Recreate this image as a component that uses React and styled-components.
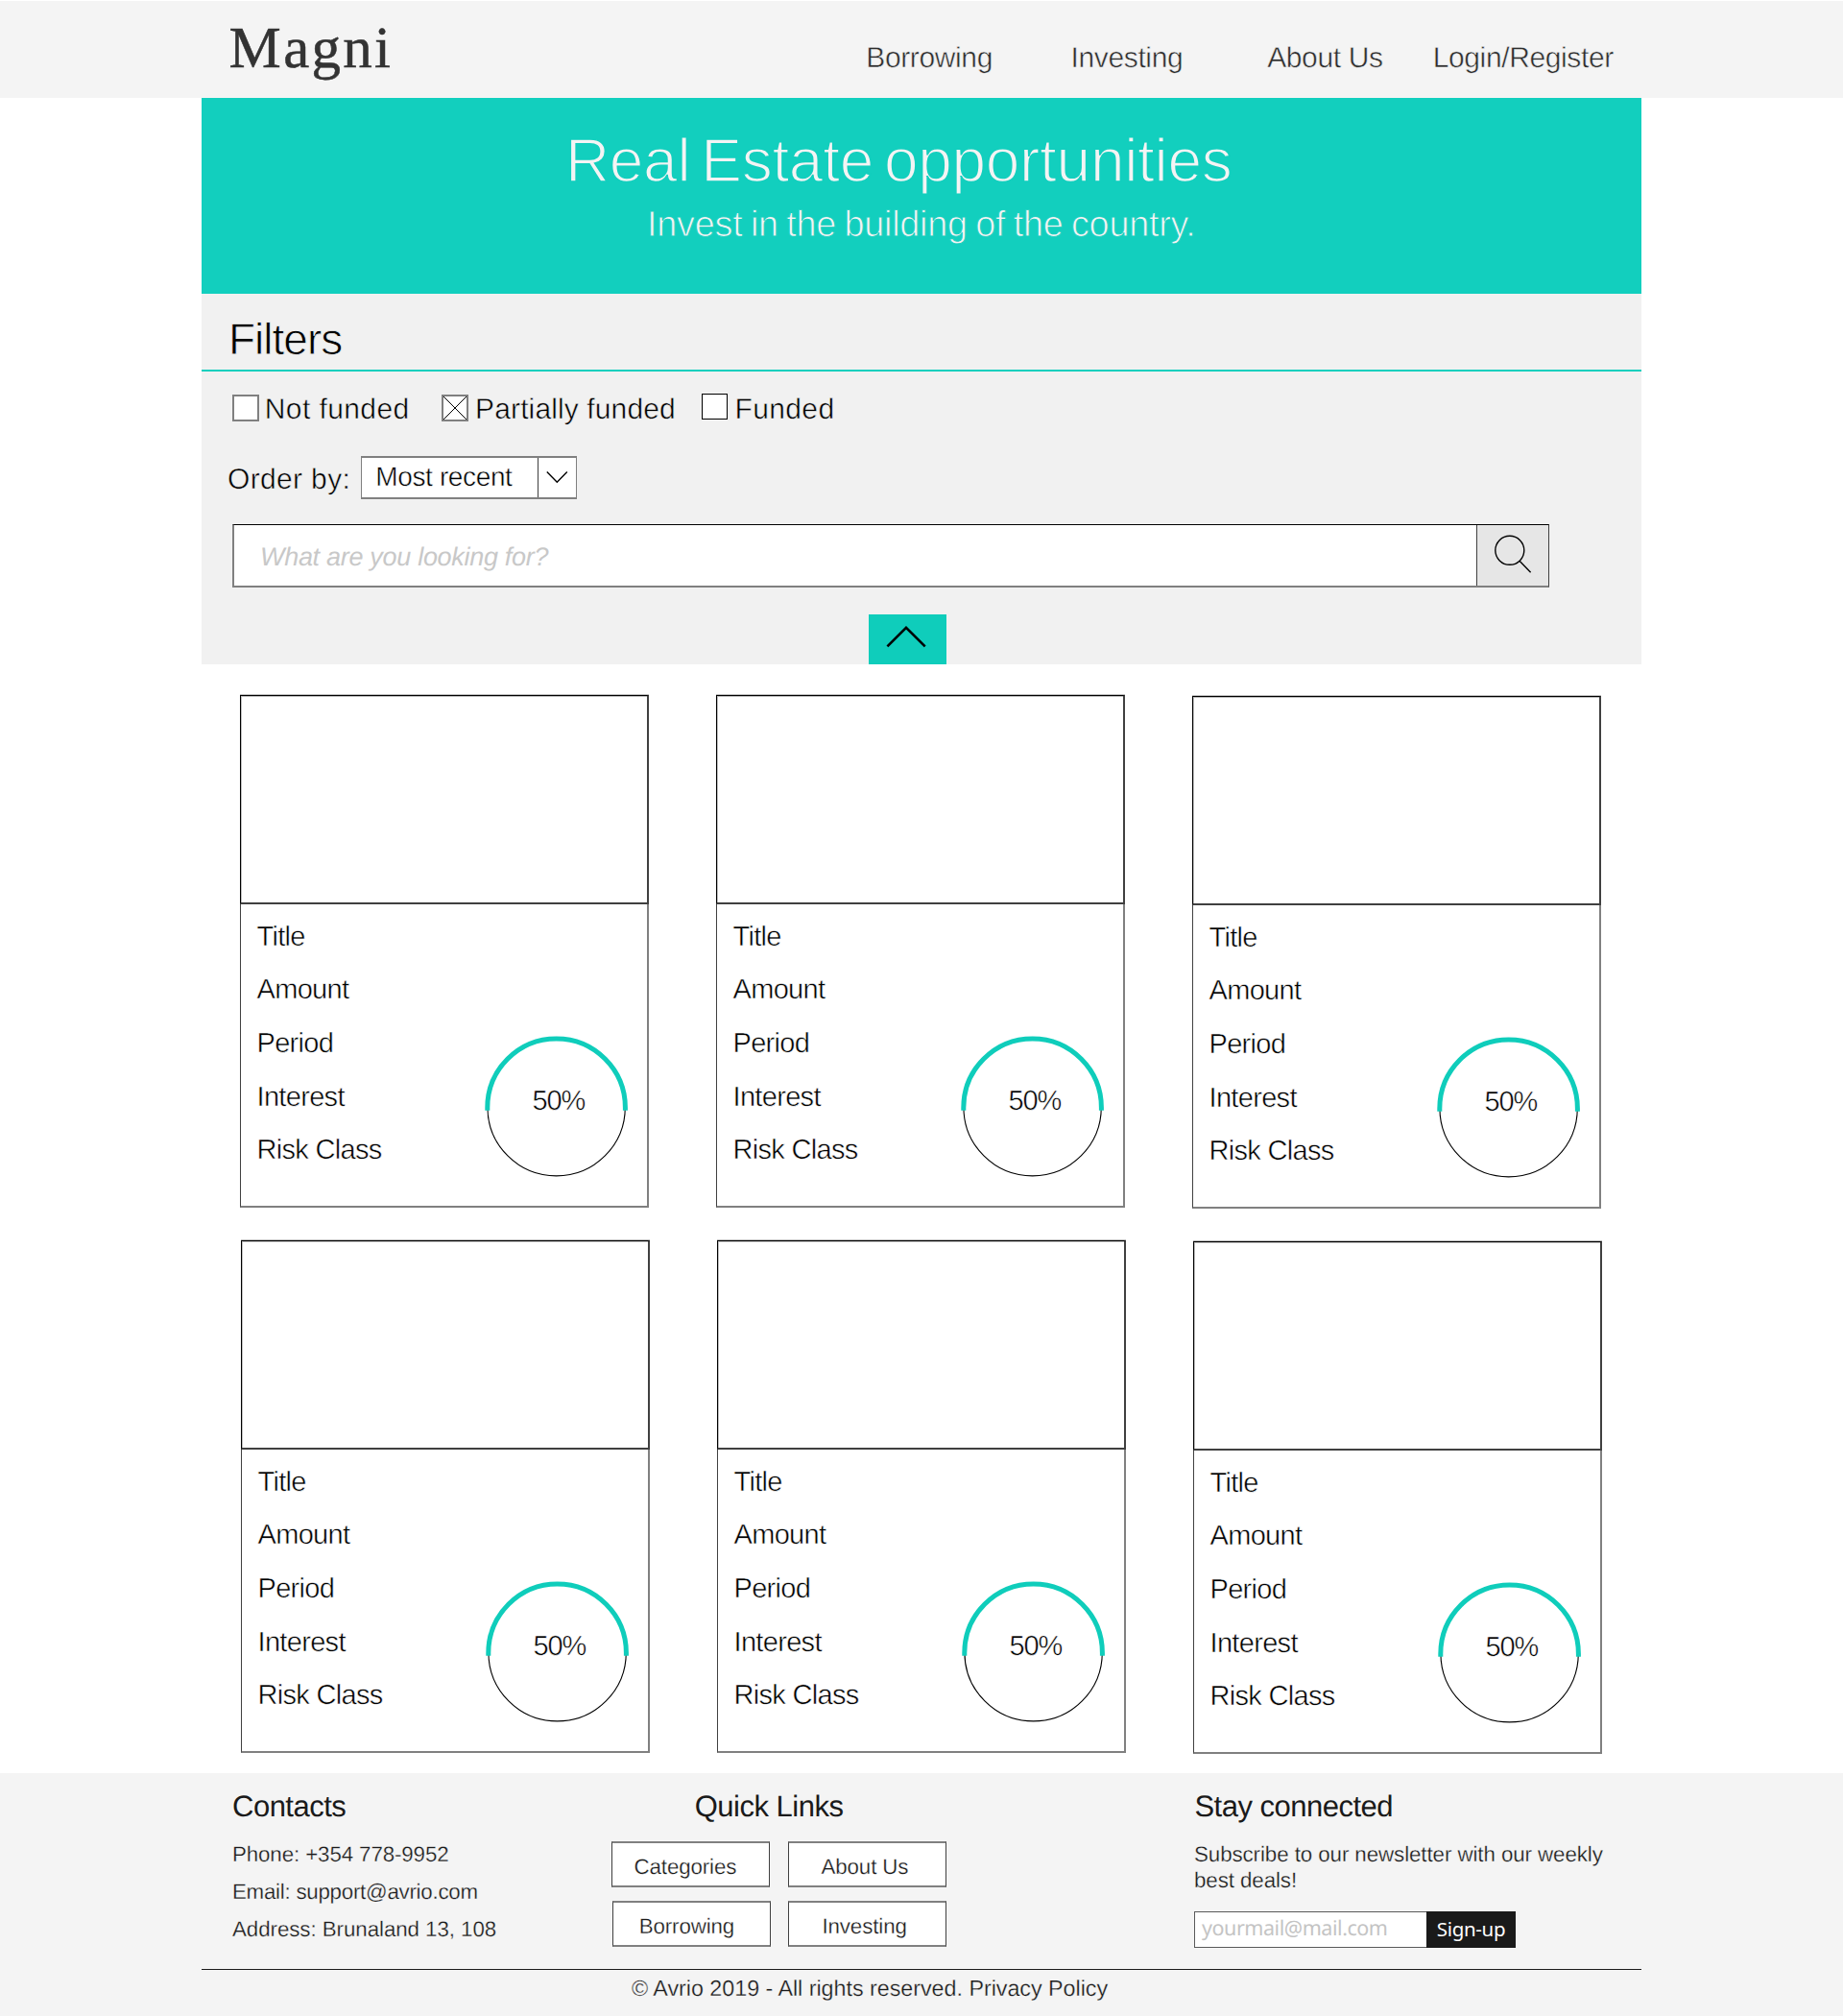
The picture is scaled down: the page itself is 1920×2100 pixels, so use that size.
import React from "react";
import styled, { createGlobalStyle, css } from "styled-components";

const teal = "#12cfbe";
const tealDeep = "#0fcdbb";
const ink = "#1a1a1a";
const edge = "#808080";
const edgeDark = "#404040";
const panel = "#f1f1f1";
const bar = "#f4f4f4";

const GlobalStyle = createGlobalStyle`
  *, *::before, *::after { box-sizing: border-box; }
  body {
    margin: 0;
    background: #fff;
    color: #000;
    font-family: "Liberation Sans", Arial, Helvetica, sans-serif;
    text-rendering: geometricPrecision;
  }
  h1, h2, h3, p, ul { margin: 0; padding: 0; font-weight: 400; }
  ul { list-style: none; }
  a { color: inherit; text-decoration: none; }
  svg { display: block; }
`;

/* Light cut of the sans face: a hairline of the surface colour trims the stems. */
const light = (surface, amount = 0.017) => css`
  -webkit-text-stroke: ${amount}em ${surface};
`;

const Page = styled.div`
  width: 1920px;
  height: 2100px;
  padding-top: 1px;
  overflow: hidden;
`;

const Container = styled.div`
  width: 1500px;
  margin: 0 auto;
`;

/* ---------- header ---------- */

const Header = styled.header`
  height: 101px;
  background: ${bar};
`;

const HeaderInner = styled(Container)`
  display: flex;
  align-items: flex-start;
`;

const Logo = styled.a`
  flex: 0 0 692.3px;
  padding: 20px 0 0 28.6px;
  font-family: "Liberation Serif", "Times New Roman", serif;
  font-size: 61px;
  line-height: 60px;
  letter-spacing: 2.3px;
  color: #333;
  -webkit-text-stroke: 0.5px #333;
`;

const Nav = styled.nav`
  display: grid;
  grid-template-columns: 213.3px 204.6px 172.5px auto;
  margin-top: 40px;
`;

const NavLink = styled.a`
  font-size: 30px;
  line-height: 40px;
  letter-spacing: -0.38px;
  white-space: nowrap;
  color: #2c2c2c;
  ${light(bar)}
`;

/* ---------- banner ---------- */

const Banner = styled.section`
  height: 204px;
  padding-top: 29.5px;
  background: ${teal};
  color: ${bar};
`;

const BannerTitle = styled.h1`
  padding-left: 378.9px;
  font-size: 64px;
  line-height: 70px;
  letter-spacing: -0.3px;
  word-spacing: -6.5px;
  ${light(teal, 0.026)}
`;

const BannerText = styled.p`
  margin-top: 10px;
  padding-left: 464.1px;
  font-size: 37.8px;
  line-height: 44px;
  letter-spacing: -0.25px;
  word-spacing: -1.8px;
  ${light(teal, 0.024)}
`;

/* ---------- filters ---------- */

const Filters = styled.section`
  height: 386px;
  background: ${panel};
`;

const FiltersTitle = styled.h2`
  height: 81px;
  padding: 17px 0 0 28px;
  border-bottom: 2px solid ${teal};
  font-size: 46px;
  line-height: 60px;
  letter-spacing: -1px;
  ${light(panel, 0.018)}
`;

const CheckRow = styled.div`
  display: grid;
  grid-template-columns: 218px 271px auto;
  padding: 20px 0 0 32px;
`;

const Check = styled.label`
  display: flex;
  align-items: flex-start;
  gap: ${(p) => p.$gap}px;
  font-size: 30px;
  line-height: 40px;
  letter-spacing: ${(p) => p.$tracking}px;
  white-space: nowrap;
  ${light(panel)}
`;

const Box = styled.span`
  flex: none;
  width: ${(p) => (p.$crisp ? 27 : 28)}px;
  height: ${(p) => (p.$crisp ? 27 : 28)}px;
  margin-top: ${(p) => (p.$crisp ? 3 : 4)}px;
  border: ${(p) => (p.$crisp ? "1px solid #000" : `2px solid ${edge}`)};
  background: #fff;
`;

const OrderRow = styled.div`
  display: flex;
  align-items: flex-start;
  height: 45px;
  margin-top: 28px;
  padding-left: 27px;
`;

const OrderLabel = styled.span`
  width: 139px;
  padding-top: 3px;
  font-size: 30px;
  line-height: 43px;
  letter-spacing: 0.35px;
  ${light(panel)}
`;

const Select = styled.div`
  display: flex;
  width: 225px;
  height: 45px;
  border: solid ${edge};
  border-width: 2px 1px;
  background: #fff;
`;

const SelectValue = styled.span`
  flex: 1;
  padding-left: 14.3px;
  border-right: 1px solid ${edgeDark};
  font-size: 28px;
  line-height: 40px;
  letter-spacing: -0.37px;
  white-space: nowrap;
  ${light("#fff")}
`;

const SearchBar = styled.div`
  display: flex;
  width: 1372px;
  height: 66px;
  margin: 26px 0 0 32px;
  border: 1px solid #000;
  border-left: 2px solid ${edge};
  border-right-color: ${edgeDark};
  border-bottom: 2px solid ${edge};
  background: #fff;
`;

const SearchHint = styled.span`
  flex: 1;
  padding: 2px 0 0 27px;
  font-size: 27px;
  font-style: italic;
  line-height: 62px;
  letter-spacing: -0.3px;
  color: #c8c8c8;
`;

const SearchButton = styled.button`
  width: 75px;
  padding: 0;
  border: 0;
  border-left: 1px solid ${edgeDark};
  background: #e6e6e6;
`;

const Collapse = styled.button`
  display: block;
  width: 81px;
  height: 52px;
  margin: 28px 0 0 695px;
  padding: 0;
  border: 0;
  background: ${tealDeep};
`;

/* ---------- cards ---------- */

const Listing = styled.section`
  display: flex;
  flex-direction: column;
  gap: 33px;
  height: 1155px;
  padding-top: 31px;
`;

const CardRow = styled.div`
  display: flex;
  gap: 70px;
  height: 535px;
  padding-left: ${(p) => p.$indent}px;
`;

const Card = styled.article`
  flex: none;
  width: 426px;
  height: 535px;
  margin-top: ${(p) => p.$drop}px;
`;

const CardImage = styled.div`
  height: 218px;
  margin-top: 1px;
  border: solid ${edgeDark};
  border-width: 1px 2px 2px 1px;
  border-top-color: #000;
  border-left-color: #000;
  background: #fff;
  box-shadow: 0 -1px 0 #bfbfbf, inset 1px 1px 0 #bfbfbf;
`;

const CardBody = styled.div`
  display: flex;
  justify-content: space-between;
  align-items: flex-start;
  height: 316px;
  padding: 0 20px 0 16.5px;
  border: solid ${edge};
  border-width: 0 2px 2px 1px;
  border-left-color: ${edgeDark};
  background: #fff;
`;

const Facts = styled.ul`
  padding-top: 6.5px;
`;

const Fact = styled.li`
  height: 55.7px;
  font-size: 29px;
  line-height: 55.7px;
  letter-spacing: -0.68px;
  white-space: nowrap;
  ${light("#fff")}
`;

const Gauge = styled.div`
  display: grid;
  width: 150px;
  height: 150px;
  margin-top: 136px;
  > * { grid-area: 1 / 1; }
`;

const GaugeValue = styled.span`
  padding-left: 50.5px;
  font-size: 29px;
  line-height: 139px;
  letter-spacing: -1.1px;
  ${light("#fff")}
`;

/* ---------- footer ---------- */

const Footer = styled.footer`
  height: 253px;
  background: ${bar};
  color: ${ink};
`;

const FooterColumns = styled(Container)`
  display: grid;
  grid-template-columns: 395px 607px 1fr;
  height: 204px;
  padding: 15px 0 0 32px;
`;

const FooterColumn = styled.div``;

const FooterTitle = styled.h3`
  padding-left: ${(p) => p.$indent || 0}px;
  font-size: 31px;
  line-height: 40px;
  letter-spacing: -0.5px;
`;

const footerText = css`
  font-size: 22.3px;
  letter-spacing: ${(p) => p.$tracking ?? -0.1}px;
  white-space: nowrap;
`;

const ContactLine = styled.p`
  ${footerText}
  line-height: 39px;
  ${light(bar, 0.012)}
`;

const ContactList = styled.div`
  margin-top: 10px;
`;

const LinkRow = styled.div`
  display: flex;
  gap: ${(p) => p.$gap}px;
  margin-top: ${(p) => p.$top}px;
  padding-left: ${(p) => p.$indent}px;
`;

const LinkButton = styled.a`
  ${footerText}
  width: 165px;
  height: 48px;
  padding: ${(p) => p.$drop}px 0 0 ${(p) => p.$pad}px;
  border: solid ${edge};
  border-width: 2px 1px;
  border-left-color: ${edgeDark};
  border-right-color: ${edgeDark};
  background: #fff;
  line-height: 44px;
  ${light("#fff", 0.012)}
`;

const Pitch = styled.p`
  ${footerText}
  margin-top: 17px;
  line-height: 26.6px;
  ${light(bar, 0.012)}
`;

const SignUp = styled.form`
  display: flex;
  width: 335px;
  height: 38px;
  margin-top: 18.8px;
  font-family: "Noto Sans", "Open Sans", sans-serif;
  line-height: 33.5px;
`;

const MailField = styled.span`
  width: 242px;
  padding-left: 7px;
  border: 1px solid #5a5a5a;
  border-right: 0;
  background: #fff;
  color: #c4c4c4;
  font-size: 21.5px;
  letter-spacing: -0.45px;
`;

const SignUpButton = styled.button`
  width: 93px;
  padding: 0;
  border: 1px solid ${ink};
  background: ${ink};
  color: #fff;
  font: inherit;
  font-size: 20.5px;
  line-height: 33.5px;
  letter-spacing: -0.3px;
`;

const Legal = styled(Container)`
  padding: 3.8px 0 0 448px;
  border-top: 1px solid ${ink};
  font-size: 23.3px;
  line-height: 30px;
  letter-spacing: -0.02px;
  ${light(bar, 0.012)}
`;

/* ---------- parts ---------- */

const facts = ["Title", "Amount", "Period", "Interest", "Risk Class"];

const rows = [
  { indent: 40, drops: [0, 0, 1] },
  { indent: 41, drops: [0, 0, 1] },
];

function OfferCard({ drop }) {
  return (
    <Card $drop={drop}>
      <CardImage />
      <CardBody>
        <Facts>
          {facts.map((f) => (
            <Fact key={f}>{f}</Fact>
          ))}
        </Facts>
        <Gauge>
          <svg width="150" height="150" fill="none">
            <circle cx="75.6" cy="75.2" r="71.7" stroke="#000" strokeWidth="1.1" />
            <path
              d="M3.8 78.8V75.7A71.8 71.8 0 0 1 147.4 75.7V78.8"
              stroke={tealDeep}
              strokeWidth="5"
            />
          </svg>
          <GaugeValue>50%</GaugeValue>
        </Gauge>
      </CardBody>
    </Card>
  );
}

export default function App() {
  return (
    <>
      <GlobalStyle />
      <Page>
        <Header>
          <HeaderInner>
            <Logo>Magni</Logo>
            <Nav>
              <NavLink>Borrowing</NavLink>
              <NavLink>Investing</NavLink>
              <NavLink>About Us</NavLink>
              <NavLink>Login/Register</NavLink>
            </Nav>
          </HeaderInner>
        </Header>

        <Container as="main">
          <Banner>
            <BannerTitle>Real Estate opportunities</BannerTitle>
            <BannerText>Invest in the building of the country.</BannerText>
          </Banner>

          <Filters>
            <FiltersTitle>Filters</FiltersTitle>
            <CheckRow>
              <Check $gap={5.8} $tracking={0.4}>
                <Box />
                Not funded
              </Check>
              <Check $gap={7.1} $tracking={0.12}>
                <Box>
                  <svg width="24" height="24" stroke="#000" strokeWidth="1">
                    <path d="M0 0L24 24M24 0L0 24" />
                  </svg>
                </Box>
                Partially funded
              </Check>
              <Check $gap={7.6} $tracking={0.35}>
                <Box $crisp />
                Funded
              </Check>
            </CheckRow>

            <OrderRow>
              <OrderLabel>Order by:</OrderLabel>
              <Select>
                <SelectValue>Most recent</SelectValue>
                <svg width="39" height="41" fill="none" stroke="#000" strokeWidth="1.4">
                  <path d="M8.8 14.6L19.3 25.3L29.8 14.6" />
                </svg>
              </Select>
            </OrderRow>

            <SearchBar>
              <SearchHint>What are you looking for?</SearchHint>
              <SearchButton aria-label="Search">
                <svg width="74" height="63" fill="none" stroke="#000" strokeWidth="1.4">
                  <circle cx="33.8" cy="26.3" r="15" />
                  <path d="M44 37.2L55.6 49.2" />
                </svg>
              </SearchButton>
            </SearchBar>

            <Collapse aria-label="Hide filters">
              <svg width="81" height="52" fill="none" stroke="#000" strokeWidth="2.6">
                <path d="M19.4 33.4L39 13.8L58.7 33.4" />
              </svg>
            </Collapse>
          </Filters>

          <Listing>
            {rows.map((row) => (
              <CardRow key={row.indent} $indent={row.indent}>
                {row.drops.map((drop, i) => (
                  <OfferCard key={i} drop={drop} />
                ))}
              </CardRow>
            ))}
          </Listing>
        </Container>

        <Footer>
          <FooterColumns>
            <FooterColumn>
              <FooterTitle>Contacts</FooterTitle>
              <ContactList>
                <ContactLine>Phone: +354 778-9952</ContactLine>
                <ContactLine $tracking={-0.25}>Email: support@avrio.com</ContactLine>
                <ContactLine $tracking={-0.05}>Address: Brunaland 13, 108</ContactLine>
              </ContactList>
            </FooterColumn>

            <FooterColumn>
              <FooterTitle $indent={86.7}>Quick Links</FooterTitle>
              <LinkRow $gap={19} $top={16} $indent={0}>
                <LinkButton $pad={22.5} $drop={3}>Categories</LinkButton>
                <LinkButton $pad={33.5} $drop={3}>About Us</LinkButton>
              </LinkRow>
              <LinkRow $gap={18} $top={14} $indent={1}>
                <LinkButton $pad={26.7} $drop={3}>Borrowing</LinkButton>
                <LinkButton $pad={34.4} $drop={3}>Investing</LinkButton>
              </LinkRow>
            </FooterColumn>

            <FooterColumn>
              <FooterTitle $indent={0.4}>Stay connected</FooterTitle>
              <Pitch $tracking={-0.07}>
                Subscribe to our newsletter with our weekly
                <br />
                best deals!
              </Pitch>
              <SignUp>
                <MailField>yourmail@mail.com</MailField>
                <SignUpButton type="button">Sign-up</SignUpButton>
              </SignUp>
            </FooterColumn>
          </FooterColumns>
          <Legal>© Avrio 2019 - All rights reserved. Privacy Policy</Legal>
        </Footer>
      </Page>
    </>
  );
}
